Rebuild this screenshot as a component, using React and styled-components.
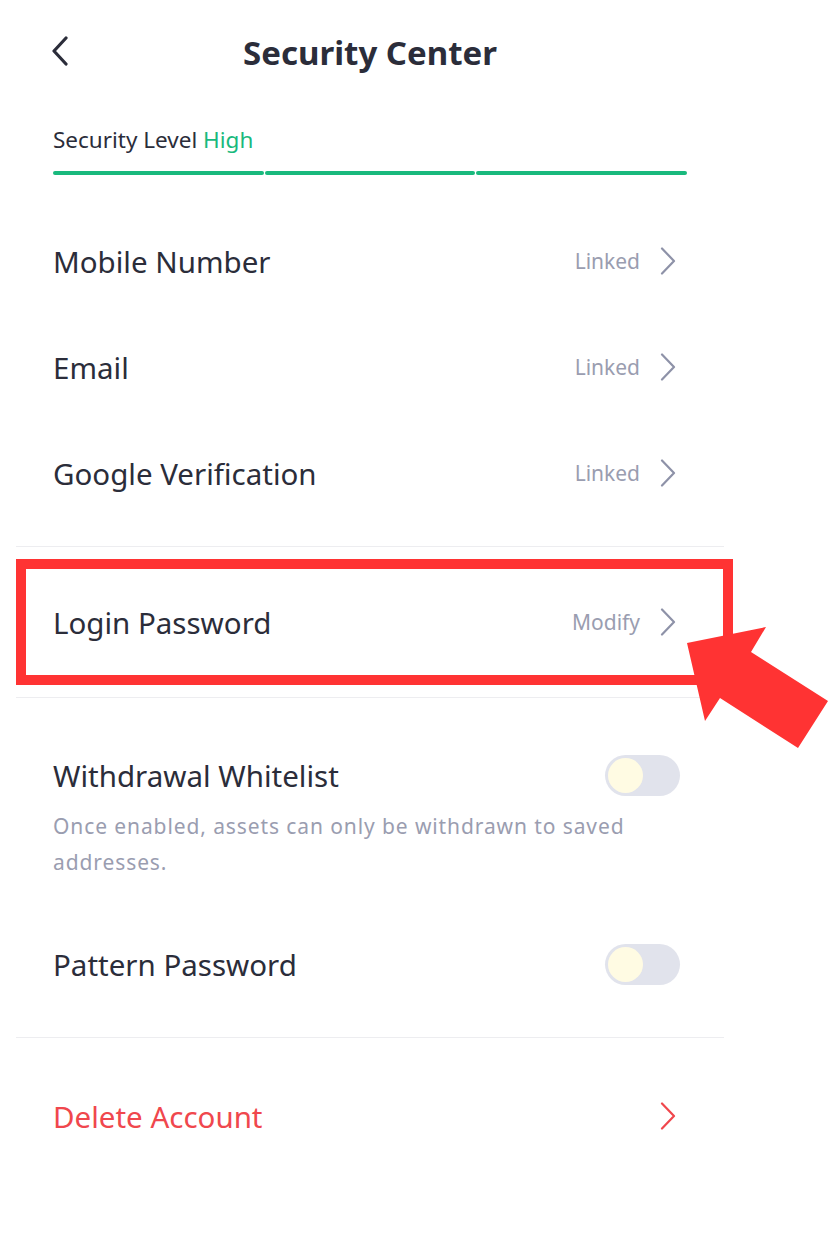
import styled, { createGlobalStyle } from 'styled-components'

const GlobalStyle = createGlobalStyle`
  body {
    margin: 0;
    background: #ffffff;
    font-family: "Noto Sans", "Open Sans", sans-serif;
    color: #2b2d3a;
  }
`

const Page = styled.div`
  position: relative;
  width: 838px;
  min-height: 1246px;
  overflow: hidden;
  background: #ffffff;
`

const Column = styled.div`
  width: 740px;
`

const Header = styled.header`
  position: relative;
  height: 104px;
  display: flex;
  align-items: center;
  justify-content: center;
`

const BackButton = styled.div`
  position: absolute;
  left: 50px;
  top: 36px;
  width: 20px;
  height: 30px;
  display: flex;
  align-items: center;
  justify-content: center;
`

const Title = styled.h1`
  margin: 0;
  font-size: 33px;
  font-weight: 700;
  color: #2b2d3a;
`

const LevelBlock = styled.div`
  padding: 21px 53px 0;
`

const LevelText = styled.div`
  font-size: 22.5px;
  line-height: 30px;
  color: #2b2d3a;

  span {
    color: #19b97d;
  }
`

const Bars = styled.div`
  display: grid;
  grid-template-columns: repeat(3, 1fr);
  gap: 1px;
  margin-top: 16px;
`

const Bar = styled.div`
  height: 4px;
  border-radius: 2px;
  background: #19b97d;
`

const Section = styled.section`
  position: relative;
  margin: 0 16px;
  padding: ${(p) => p.$pad || '0'};
  border-bottom: ${(p) => (p.$last ? 'none' : '1px solid #ededf0')};
`

const Row = styled.div`
  display: flex;
  align-items: center;
  justify-content: space-between;
  height: ${(p) => p.$height || 106}px;
  padding: 0 48px 0 37px;
`

const Label = styled.div`
  font-size: 29.5px;
  color: ${(p) => (p.$danger ? '#f0474d' : '#2b2d3a')};
`

const Status = styled.div`
  display: flex;
  align-items: center;
  gap: 20px;
  font-size: 21px;
  color: #9a9db0;
`

const ToggleBlock = styled.div`
  padding: 0 44px 0 37px;
  margin-top: ${(p) => p.$gap || 0}px;
`

const ToggleRow = styled.div`
  display: flex;
  align-items: center;
  justify-content: space-between;
  height: 40px;
`

const Switch = styled.div`
  width: 75px;
  height: 41px;
  border-radius: 21px;
  background: #e1e3ec;
  display: flex;
  align-items: center;
  padding: 0 3px;
  box-sizing: border-box;
`

const Knob = styled.div`
  width: 35px;
  height: 35px;
  border-radius: 50%;
  background: #fffbe3;
`

const Description = styled.p`
  margin: 13px 0 0;
  max-width: 600px;
  font-size: 21px;
  line-height: 36px;
  letter-spacing: 0.9px;
  color: #9a9db0;
`

const Highlight = styled.div`
  position: absolute;
  left: 0;
  top: 12px;
  width: 717px;
  height: 126px;
  border: 10px solid #ff3333;
  box-sizing: border-box;
  pointer-events: none;
`

const Pointer = styled.svg`
  position: absolute;
  left: 680px;
  top: 620px;
`

const Chevron = ({ color = '#8e92a8', width = 2.2 }) => (
  <svg width="16" height="28" viewBox="0 0 16 28" fill="none">
    <path d="M2 1.5 L14 14 L2 26.5" stroke={color} strokeWidth={width} strokeLinecap="round" strokeLinejoin="round" />
  </svg>
)

const LinkRow = ({ label, status }) => (
  <Row>
    <Label>{label}</Label>
    <Status>
      {status}
      <Chevron />
    </Status>
  </Row>
)

export default function App() {
  return (
    <>
      <GlobalStyle />
      <Page>
        <Column>
          <Header>
            <BackButton>
              <svg width="18" height="30" viewBox="0 0 18 30" fill="none">
                <path d="M15 2 L3 15 L15 28" stroke="#2b2d3a" strokeWidth="3.2" strokeLinecap="round" strokeLinejoin="round" />
              </svg>
            </BackButton>
            <Title>Security Center</Title>
          </Header>

          <LevelBlock>
            <LevelText>
              Security Level <span>High</span>
            </LevelText>
            <Bars>
              <Bar />
              <Bar />
              <Bar />
            </Bars>
          </LevelBlock>

          <Section $pad="33px 0 20px">
            <LinkRow label="Mobile Number" status="Linked" />
            <LinkRow label="Email" status="Linked" />
            <LinkRow label="Google Verification" status="Linked" />
          </Section>

          <Section>
            <Row $height={150}>
              <Label>Login Password</Label>
              <Status>
                Modify
                <Chevron />
              </Status>
            </Row>
            <Highlight />
          </Section>

          <Section $pad="57px 0 53px">
            <ToggleBlock>
              <ToggleRow>
                <Label>Withdrawal Whitelist</Label>
                <Switch>
                  <Knob />
                </Switch>
              </ToggleRow>
              <Description>
                Once enabled, assets can only be withdrawn to saved addresses.
              </Description>
            </ToggleBlock>
            <ToggleBlock $gap={64}>
              <ToggleRow>
                <Label>Pattern Password</Label>
                <Switch>
                  <Knob />
                </Switch>
              </ToggleRow>
            </ToggleBlock>
          </Section>

          <Section $pad="58px 0 0" $last>
            <Row $height={40}>
              <Label $danger>Delete Account</Label>
              <Chevron color="#f0474d" />
            </Row>
          </Section>
        </Column>

        <Pointer width="158" height="140" viewBox="0 0 158 140">
          <polygon points="7,23 86,7 71,32 148,81 118,128 40,78 25,101" fill="#ff3333" />
        </Pointer>
      </Page>
    </>
  )
}
